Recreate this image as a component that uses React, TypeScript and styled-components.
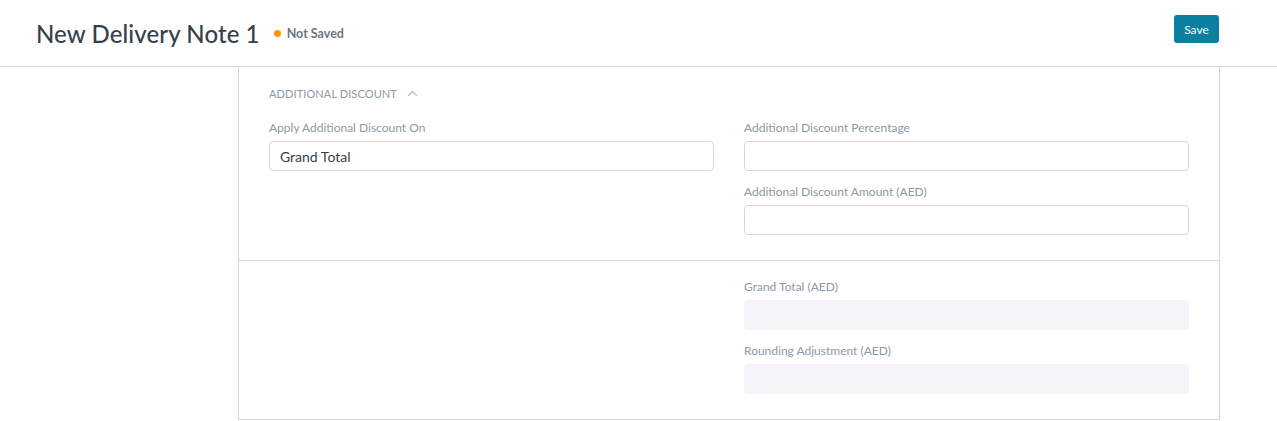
import React from "react";
import styled, { createGlobalStyle } from "styled-components";

const Global = createGlobalStyle`
  html, body { margin: 0; padding: 0; background: #ffffff; }
  body { font-family: "Lato", "Noto Sans", sans-serif; -webkit-font-smoothing: antialiased; }
  * { box-sizing: border-box; }
`;

const Page = styled.div`
  width: 1277px;
  height: 421px;
  overflow: hidden;
  background: #fff;
`;

const Header = styled.header`
  display: flex;
  align-items: center;
  justify-content: space-between;
  height: 67px;
  padding: 0 58px 0 36px;
  border-bottom: 1px solid #d1d8dd;
`;

const TitleWrap = styled.div`
  display: flex;
  align-items: center;
  margin-top: 1px;
`;

const Title = styled.h1`
  margin: 0;
  font-size: 24px;
  font-weight: 500;
  color: #36414c;
  letter-spacing: 0.1px;
`;

const Indicator = styled.span`
  display: inline-flex;
  align-items: center;
  margin-left: 14px;
  font-size: 12.5px;
  font-weight: 700;
  color: #6c7680;
  &::before {
    content: "";
    width: 7px;
    height: 7px;
    border-radius: 50%;
    background: #ff9800;
    margin-right: 6px;
  }
`;

const SaveButton = styled.button`
  height: 28px;
  width: 45px;
  border: none;
  border-radius: 3px;
  background: #0b80a0;
  color: #fff;
  font-family: inherit;
  font-size: 12px;
  padding: 0;
  margin-bottom: 8px;
`;

const Panel = styled.div`
  margin-left: 238px;
  width: 982px;
  border-left: 1px solid #d1d8dd;
  border-right: 1px solid #d1d8dd;
`;

const Section = styled.section<{ $top?: number }>`
  padding: ${(p) => p.$top ?? 17}px 30px 14px;
  border-bottom: 1px solid #d1d8dd;
`;

const SectionHead = styled.div`
  display: flex;
  align-items: center;
  gap: 10px;
  height: 18px;
  margin-bottom: 16px;
  font-size: 11px;
  color: #8d99a6;
  text-transform: uppercase;
  letter-spacing: 0.1px;
`;

const Grid = styled.div`
  display: grid;
  grid-template-columns: 445px 445px;
  column-gap: 30px;
`;

const Column = styled.div`
  display: flex;
  flex-direction: column;
`;

const Field = styled.div`
  margin-bottom: 11px;
`;

const Label = styled.div`
  height: 18px;
  line-height: 18px;
  padding-top: 1px;
  margin-bottom: 5px;
  font-size: 12px;
  color: #8d99a6;
`;

const Input = styled.div<{ $readonly?: boolean }>`
  height: 30px;
  border-radius: 4px;
  border: 1px solid ${(p) => (p.$readonly ? "#f4f5f8" : "#d1d8dd")};
  background: ${(p) => (p.$readonly ? "#f4f5f8" : "#fff")};
  padding: 0 10px;
  display: flex;
  align-items: center;
  font-size: 14px;
  color: #36414c;
`;

const Chevron = () => (
  <svg width="11" height="7" viewBox="0 0 11 7" fill="none">
    <path d="M1 6 L5.5 1.5 L10 6" stroke="#c0c6cc" strokeWidth="1.6" />
  </svg>
);

export default function App() {
  return (
    <Page>
      <Global />
      <Header>
        <TitleWrap>
          <Title>New Delivery Note 1</Title>
          <Indicator>Not Saved</Indicator>
        </TitleWrap>
        <SaveButton>Save</SaveButton>
      </Header>
      <Panel>
        <Section>
          <SectionHead>
            Additional Discount <Chevron />
          </SectionHead>
          <Grid>
            <Column>
              <Field>
                <Label>Apply Additional Discount On</Label>
                <Input>Grand Total</Input>
              </Field>
            </Column>
            <Column>
              <Field>
                <Label>Additional Discount Percentage</Label>
                <Input />
              </Field>
              <Field>
                <Label>Additional Discount Amount (AED)</Label>
                <Input />
              </Field>
            </Column>
          </Grid>
        </Section>
        <Section $top={16}>
          <Grid>
            <Column />
            <Column>
              <Field>
                <Label>Grand Total (AED)</Label>
                <Input $readonly />
              </Field>
              <Field>
                <Label>Rounding Adjustment (AED)</Label>
                <Input $readonly />
              </Field>
            </Column>
          </Grid>
        </Section>
      </Panel>
    </Page>
  );
}
